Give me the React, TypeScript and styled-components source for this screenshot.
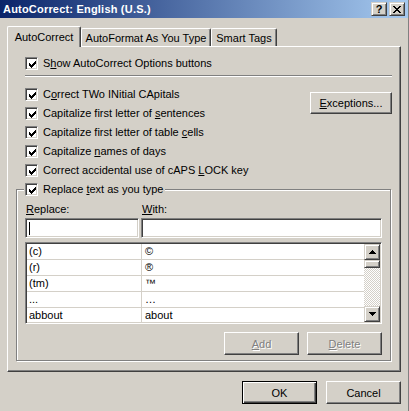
import React from "react";
import styled, { createGlobalStyle, css } from "styled-components";

const GlobalStyle = createGlobalStyle`
  html, body { margin: 0; padding: 0; }
  body {
    background: #d4d0c8;
    font-family: "Liberation Sans", Arial, sans-serif;
    font-size: 11px;
    color: #000;
  }
  * { box-sizing: border-box; }
`;

const FONT = `"Liberation Sans", Arial, sans-serif`;

const Window = styled.div`
  width: 409px;
  height: 411px;
  background: #d4d0c8;
  border-right: 1px solid #808080;
  display: flex;
  flex-direction: column;
  overflow: hidden;
`;

const TitleBar = styled.div`
  height: 18px;
  display: flex;
  align-items: center;
  padding: 0 3px 0 3px;
  background: linear-gradient(to right, #0a246a, #a6caf0);
`;

const TitleText = styled.div`
  flex: 1;
  color: #fff;
  font-weight: bold;
  font-size: 11px;
  letter-spacing: 0.2px;
  line-height: 18px;
  white-space: nowrap;
`;

const CaptionButtons = styled.div`
  display: flex;
  gap: 2px;
`;

const CaptionButton = styled.div`
  width: 16px;
  height: 14px;
  background: #d4d0c8;
  border: 1px solid;
  border-color: #d4d0c8 #404040 #404040 #d4d0c8;
  box-shadow: inset 1px 1px #fff, inset -1px -1px #808080;
  display: flex;
  align-items: center;
  justify-content: center;
  font-weight: bold;
  font-size: 11px;
  line-height: 12px;
  color: #000;
`;

const Body = styled.div`
  flex: 1;
  display: flex;
  flex-direction: column;
  padding: 8px 7px 0 7px;
`;

const TabStrip = styled.div`
  height: 20px;
  display: flex;
  align-items: flex-end;
  position: relative;
  z-index: 1;
`;

const Tab = styled.div<{ $active?: boolean; $w: number }>`
  width: ${(p) => p.$w}px;
  height: ${(p) => (p.$active ? 21 : 18)}px;
  margin-bottom: ${(p) => (p.$active ? -1 : 0)}px;
  background: #d4d0c8;
  border-top: 1px solid #fff;
  border-left: 1px solid #fff;
  border-right: 1px solid #404040;
  border-top-left-radius: 2px;
  border-top-right-radius: 2px;
  box-shadow: inset -1px 0 #808080;
  display: flex;
  align-items: center;
  justify-content: center;
  white-space: nowrap;
  padding-bottom: ${(p) => (p.$active ? 1 : 0)}px;
`;

const Panel = styled.div`
  border: 1px solid;
  border-color: #fff #404040 #404040 #fff;
  box-shadow: inset -1px -1px #808080;
  padding: 10px 8px 10px 8px;
  display: flex;
  flex-direction: column;
`;

const CheckRow = styled.label`
  display: flex;
  align-items: center;
  height: 13px;
  line-height: 13px;
  gap: 5px;
  white-space: nowrap;
`;

const Indented = styled.div`
  margin-left: 9px;
`;

const Box = styled.span`
  width: 13px;
  height: 13px;
  flex: none;
  background: #fff;
  border: 1px solid;
  border-color: #808080 #fff #fff #808080;
  box-shadow: inset 1px 1px #404040, inset -1px -1px #d4d0c8;
  display: flex;
  align-items: flex-start;
  justify-content: flex-start;
  padding: 2px 0 0 2px;
`;

const Separator = styled.div`
  margin: 5px 0 0 9px;
  height: 2px;
  border-top: 1px solid #808080;
  border-bottom: 1px solid #fff;
`;

const Options = styled.div`
  margin: 11px 0 0 9px;
  display: flex;
  justify-content: space-between;
  align-items: flex-start;
`;

const OptionList = styled.div`
  display: flex;
  flex-direction: column;
  gap: 6px;
`;

const Button = styled.div<{ $default?: boolean; $disabled?: boolean; $w?: number; $h?: number }>`
  width: ${(p) => p.$w ?? 75}px;
  height: ${(p) => p.$h ?? 23}px;
  background: #d4d0c8;
  font-family: ${FONT};
  font-size: 11px;
  color: #000;
  display: flex;
  align-items: center;
  justify-content: center;
  border: 1px solid;
  border-color: #fff #404040 #404040 #fff;
  box-shadow: inset -1px -1px #808080, inset 1px 1px #d4d0c8;
  white-space: nowrap;
  ${(p) =>
    p.$default &&
    css`
      border-color: #000;
      box-shadow: inset 1px 1px #fff, inset -1px -1px #404040, inset -2px -2px #808080;
    `}
  ${(p) =>
    p.$disabled &&
    css`
      color: #808080;
      text-shadow: 1px 1px 0 #fff;
    `}
`;

const ExceptionsWrap = styled.div`
  margin-top: 4px;
`;

const Group = styled.div`
  position: relative;
  margin: 12px 1px 0 0;
  border: 1px solid #808080;
  box-shadow: inset 1px 1px #fff, 1px 1px 0 #fff;
  padding: 13px 8px 5px 8px;
  display: flex;
  flex-direction: column;
`;

const Legend = styled.div`
  position: absolute;
  top: -7px;
  left: 7px;
  padding: 0 2px 0 1px;
  background: #d4d0c8;
`;

const FieldGrid = styled.div<{ $mt?: number }>`
  display: grid;
  grid-template-columns: 114px 1fr;
  column-gap: 2px;
  margin-top: ${(p) => p.$mt ?? 0}px;
`;

const FieldLabel = styled.div`
  height: 13px;
  line-height: 13px;
  padding-left: 1px;
`;

const TextBox = styled.div`
  height: 20px;
  background: #fff;
  border: 1px solid;
  border-color: #808080 #fff #fff #808080;
  box-shadow: inset 1px 1px #404040, inset -1px -1px #d4d0c8;
  display: flex;
  align-items: center;
  padding-left: 3px;
`;

const Caret = styled.span`
  width: 1px;
  height: 13px;
  background: #000;
`;

const ListBox = styled.div`
  margin-top: 4px;
  height: 82px;
  background: #fff;
  border: 1px solid;
  border-color: #808080 #fff #fff #808080;
  box-shadow: inset 1px 1px #404040, inset -1px -1px #d4d0c8;
  padding: 1px;
  display: flex;
`;

const Rows = styled.div`
  flex: 1;
  overflow: hidden;
  display: flex;
  flex-direction: column;
`;

const Row = styled.div`
  flex: none;
  height: 16px;
  display: grid;
  grid-template-columns: 115px 1fr;
  border-bottom: 1px solid #d4d0c8;
`;

const Cell = styled.div<{ $first?: boolean }>`
  line-height: 15px;
  padding-left: ${(p) => (p.$first ? 2 : 3)}px;
  border-right: ${(p) => (p.$first ? "1px solid #d4d0c8" : "none")};
  white-space: nowrap;
`;

const ScrollBar = styled.div`
  width: 16px;
  flex: none;
  display: flex;
  flex-direction: column;
`;

const ScrollButton = styled.div<{ $h?: number }>`
  width: 16px;
  height: ${(p) => p.$h ?? 16}px;
  flex: none;
  background: #d4d0c8;
  border: 1px solid;
  border-color: #d4d0c8 #404040 #404040 #d4d0c8;
  box-shadow: inset 1px 1px #fff, inset -1px -1px #808080;
  display: flex;
  align-items: center;
  justify-content: center;
`;

const Track = styled.div`
  flex: 1;
  background-color: #d4d0c8;
  background-image: conic-gradient(#fff 25%, transparent 0 50%, #fff 0 75%, transparent 0);
  background-size: 2px 2px;
`;

const ButtonRow = styled.div<{ $gap: number; $mt: number }>`
  display: flex;
  justify-content: flex-end;
  gap: ${(p) => p.$gap}px;
  margin-top: ${(p) => p.$mt}px;
`;

const Check = () => (
  <svg width="7" height="7" viewBox="0 0 7 7" shapeRendering="crispEdges" style={{ display: "block", marginLeft: 1, marginTop: 1 }}>
    {[2, 3, 4, 3, 2, 1, 0].map((y, x) => (
      <rect key={x} x={x} y={y} width={1} height={3} fill="#000" />
    ))}
  </svg>
);

const CheckBox = () => (
  <Box>
    <Check />
  </Box>
);

const Arrow = ({ down }: { down?: boolean }) => (
  <svg width="7" height="4" viewBox="0 0 7 4" shapeRendering="crispEdges" style={{ display: "block" }}>
    {[0, 1, 2, 3].map((i) => {
      const w = down ? 7 - i * 2 : 1 + i * 2;
      return <rect key={i} x={(7 - w) / 2} y={i} width={w} height={1} fill="#000" />;
    })}
  </svg>
);

const CloseGlyph = () => (
  <svg width="8" height="7" viewBox="0 0 8 7" shapeRendering="crispEdges" style={{ display: "block" }}>
    {[0, 1, 2, 3, 4, 5, 6].map((y) => {
      const a = y <= 3 ? y : 6 - y;
      return (
        <g key={y}>
          <rect x={a} y={y} width={2} height={1} fill="#000" />
          <rect x={6 - a} y={y} width={2} height={1} fill="#000" />
        </g>
      );
    })}
  </svg>
);

const options: React.ReactNode[] = [
  <>C<u>o</u>rrect TWo INitial CApitals</>,
  <>Capitalize first letter of <u>s</u>entences</>,
  <>Capitalize first letter of table <u>c</u>ells</>,
  <>Capitalize <u>n</u>ames of days</>,
  <>Correct accidental use of cAPS <u>L</u>OCK key</>,
];

const entries: [string, string][] = [
  ["(c)", "©"],
  ["(r)", "®"],
  ["(tm)", "™"],
  ["...", "…"],
  ["abbout", "about"],
];

export default function App() {
  return (
    <>
      <GlobalStyle />
      <Window>
        <TitleBar>
          <TitleText>AutoCorrect: English (U.S.)</TitleText>
          <CaptionButtons>
            <CaptionButton>?</CaptionButton>
            <CaptionButton>
              <CloseGlyph />
            </CaptionButton>
          </CaptionButtons>
        </TitleBar>
        <Body>
          <TabStrip>
            <Tab $active $w={74}>AutoCorrect</Tab>
            <Tab $w={130}>AutoFormat As You Type</Tab>
            <Tab $w={66}>Smart Tags</Tab>
          </TabStrip>
          <Panel>
            <Indented>
              <CheckRow>
                <CheckBox />
                <span>
                  S<u>h</u>ow AutoCorrect Options buttons
                </span>
              </CheckRow>
            </Indented>
            <Separator />
            <Options>
              <OptionList>
                {options.map((o, i) => (
                  <CheckRow key={i}>
                    <CheckBox />
                    <span>{o}</span>
                  </CheckRow>
                ))}
              </OptionList>
              <ExceptionsWrap>
                <Button $w={82} $h={22}>
                  <u>E</u>xceptions...
                </Button>
              </ExceptionsWrap>
            </Options>
            <Group>
              <Legend>
                <CheckRow>
                  <CheckBox />
                  <span>
                    Replace <u>t</u>ext as you type
                  </span>
                </CheckRow>
              </Legend>
              <FieldGrid>
                <FieldLabel>
                  <u>R</u>eplace:
                </FieldLabel>
                <FieldLabel>
                  <u>W</u>ith:
                </FieldLabel>
              </FieldGrid>
              <FieldGrid $mt={2}>
                <TextBox>
                  <Caret />
                </TextBox>
                <TextBox />
              </FieldGrid>
              <ListBox>
                <Rows>
                  {entries.map(([a, b]) => (
                    <Row key={a}>
                      <Cell $first>{a}</Cell>
                      <Cell>{b}</Cell>
                    </Row>
                  ))}
                </Rows>
                <ScrollBar>
                  <ScrollButton>
                    <Arrow />
                  </ScrollButton>
                  <ScrollButton $h={8} />
                  <Track />
                  <ScrollButton>
                    <Arrow down />
                  </ScrollButton>
                </ScrollBar>
              </ListBox>
              <ButtonRow $gap={8} $mt={8}>
                <Button $disabled>
                  <u>A</u>dd
                </Button>
                <Button $disabled>
                  <u>D</u>elete
                </Button>
              </ButtonRow>
            </Group>
          </Panel>
          <ButtonRow $gap={9} $mt={9}>
            <Button $default>OK</Button>
            <Button>Cancel</Button>
          </ButtonRow>
        </Body>
      </Window>
    </>
  );
}
